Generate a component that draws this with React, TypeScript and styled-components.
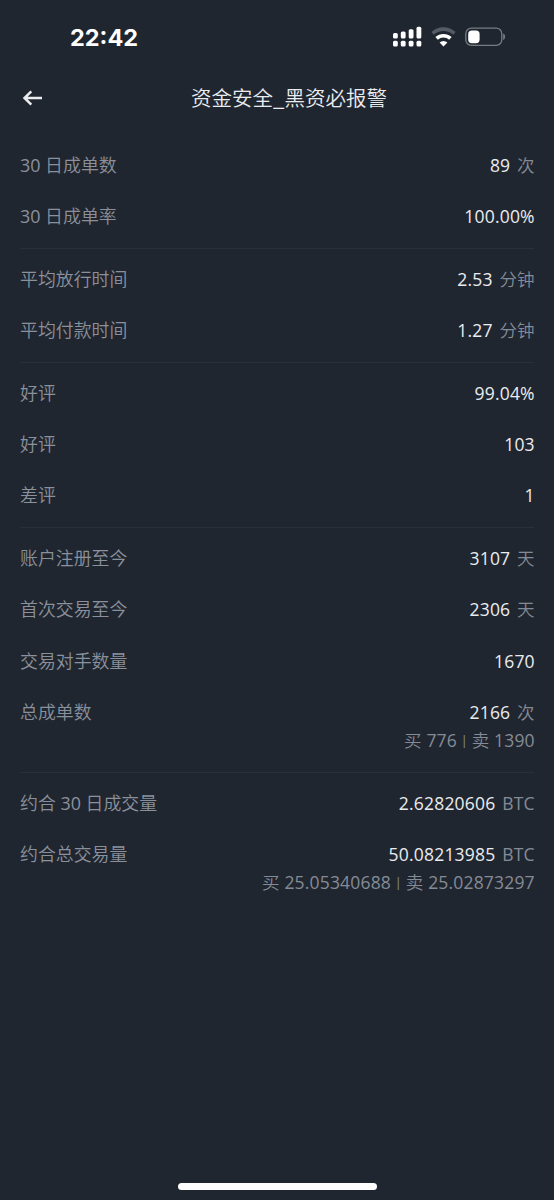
import React from 'react';
import styled, { createGlobalStyle } from 'styled-components';

const GlobalStyle = createGlobalStyle`
  * { box-sizing: border-box; }
  body {
    margin: 0;
    background: #20262f;
    font-family: "Open Sans", "Noto Sans CJK SC", sans-serif;
  }
`;

const Screen = styled.div`
  display: flex;
  flex-direction: column;
  width: 554px;
  height: 1200px;
  background: #20262f;
  color: #eaecef;
  overflow: hidden;
`;

const StatusBar = styled.div`
  display: flex;
  align-items: center;
  justify-content: space-between;
  height: 75px;
  padding: 0 48px 0 70px;
  flex: none;
`;

const Clock = styled.div`
  font-family: Inter, sans-serif;
  font-size: 23.5px;
  font-weight: 700;
  line-height: 28px;
  letter-spacing: 0;
  color: #fff;
`;

const StatusIcons = styled.svg`
  display: block;
  width: 114px;
  height: 24px;
`;

const Header = styled.header`
  display: grid;
  grid-template-columns: 60px 1fr 36px;
  align-items: center;
  height: 46px;
  padding: 0 20px;
  flex: none;
`;

const BackButton = styled.button`
  display: flex;
  padding: 0;
  border: 0;
  background: none;
  color: #eaecef;
`;

const Title = styled.h1`
  margin: 0 0 2px;
  font-size: 20.5px;
  font-weight: 350;
  line-height: 30px;
  text-align: center;
  white-space: nowrap;
  font-family: "Noto Sans CJK SC", sans-serif;
`;

const Stats = styled.main`
  flex: 1;
  padding: 14px 20px 0;
`;

const Section = styled.section`
  padding: 5px 0;
  & + & { border-top: 1px solid #29303a; }
`;

const Row = styled.div`
  display: flex;
  justify-content: space-between;
  font-size: 17.5px;
  line-height: 51.4px;
  height: 51.4px;
  white-space: nowrap;
`;

const Label = styled.span`
  font-size: 17.9px;
  font-weight: 350;
  color: #8b919c;
`;

const Value = styled.span`
  display: flex;
  align-items: baseline;
  gap: 6.8px;
  margin-right: -0.8px;
  letter-spacing: 0.2px;
  color: #eaecef;
`;

const Unit = styled.span`
  font-weight: 350;
  color: #858b96;
`;

const Latin = styled.span`
  font-weight: 400;
`;

const Detail = styled.div`
  height: 28.4px;
  margin: -12px -0.8px 12px 0;
  font-size: 17.5px;
  font-weight: 350;
  line-height: 28.4px;
  letter-spacing: 0.18px;
  text-align: right;
  color: #858b96;
`;

const Separator = styled.span`
  margin: 0 -1.2px;
  font-size: 13.5px;
  font-weight: 500;
  line-height: 0;
  vertical-align: 2.5px;
`;

const HomeArea = styled.footer`
  display: flex;
  justify-content: center;
  height: 17px;
  flex: none;
`;

const HomeIndicator = styled.div`
  width: 199px;
  height: 7px;
  border-radius: 4px;
  background: #fff;
`;

type Stat = {
  label: string;
  value: string;
  unit?: string;
  detail?: { buy: string; sell: string };
};

const sections: Stat[][] = [
  [
    { label: '30 日成单数', value: '89', unit: '次' },
    { label: '30 日成单率', value: '100.00%' },
  ],
  [
    { label: '平均放行时间', value: '2.53', unit: '分钟' },
    { label: '平均付款时间', value: '1.27', unit: '分钟' },
  ],
  [
    { label: '好评', value: '99.04%' },
    { label: '好评', value: '103' },
    { label: '差评', value: '1' },
  ],
  [
    { label: '账户注册至今', value: '3107', unit: '天' },
    { label: '首次交易至今', value: '2306', unit: '天' },
    { label: '交易对手数量', value: '1670' },
    { label: '总成单数', value: '2166', unit: '次', detail: { buy: '776', sell: '1390' } },
  ],
  [
    { label: '约合 30 日成交量', value: '2.62820606', unit: 'BTC' },
    {
      label: '约合总交易量',
      value: '50.08213985',
      unit: 'BTC',
      detail: { buy: '25.05340688', sell: '25.02873297' },
    },
  ],
];

const signalBars = [
  { x: 1, y: 7, h: 5.5 },
  { x: 8.8, y: 5.5, h: 7 },
  { x: 16.7, y: 3.2, h: 9.3 },
  { x: 24.5, y: 0.8, h: 11.7 },
];

// Latin letters and digits take a heavier weight than the Chinese around them.
const mixed = (text: string) =>
  text
    .split(/([0-9A-Z]+)/)
    .map((part, i) => (i % 2 ? <Latin key={i}>{part}</Latin> : part));

export default function App() {
  return (
    <>
      <GlobalStyle />
      <Screen>
        <StatusBar>
          <Clock>22:42</Clock>
          <StatusIcons viewBox="0 0 114 24" fill="none">
            <g fill="#fff">
              {signalBars.map((b) => (
                <React.Fragment key={b.x}>
                  <rect x={b.x} y={b.y} width="4.8" height={b.h} rx="1.5" />
                  <rect x={b.x} y="14.8" width="4.8" height="5.6" rx="1.5" />
                </React.Fragment>
              ))}
            </g>
            <path d="M40.6 7.3a16.2 16.2 0 0 1 21.8 0" stroke="#555b64" strokeWidth="3.6" />
            <path d="M44.6 12.4a10.2 10.2 0 0 1 13.8 0" stroke="#fff" strokeWidth="3.6" />
            <path d="M51.5 20.4l-3.9-3.8a5.6 5.6 0 0 1 7.8 0z" fill="#fff" />
            <rect x="73.8" y="2.1" width="36" height="17.3" rx="5.6" stroke="#777c83" strokeWidth="1.3" />
            <rect x="76.2" y="4.4" width="11.4" height="12.8" rx="3.6" fill="#fff" />
            <path d="M111.2 7.6c2.6 1 2.6 5.4 0 6.4z" fill="#777c83" />
          </StatusIcons>
        </StatusBar>
        <Header>
          <BackButton aria-label="返回">
            <svg width="24" height="20" viewBox="0 0 24 20" fill="none" stroke="currentColor" strokeWidth="2.5">
              <path d="M22 10H4.5M11.3 3.3L4.5 10l6.8 6.7" />
            </svg>
          </BackButton>
          <Title>资金安全_黑资必报警</Title>
        </Header>
        <Stats>
          {sections.map((rows, i) => (
            <Section key={i}>
              {rows.map((row, j) => (
                <React.Fragment key={j}>
                  <Row>
                    <Label>{mixed(row.label)}</Label>
                    <Value>
                      {row.value}
                      {row.unit && <Unit>{mixed(row.unit)}</Unit>}
                    </Value>
                  </Row>
                  {row.detail && (
                    <Detail>
                      买 <Latin>{row.detail.buy}</Latin> <Separator>|</Separator> 卖{' '}
                      <Latin>{row.detail.sell}</Latin>
                    </Detail>
                  )}
                </React.Fragment>
              ))}
            </Section>
          ))}
        </Stats>
        <HomeArea>
          <HomeIndicator />
        </HomeArea>
      </Screen>
    </>
  );
}
